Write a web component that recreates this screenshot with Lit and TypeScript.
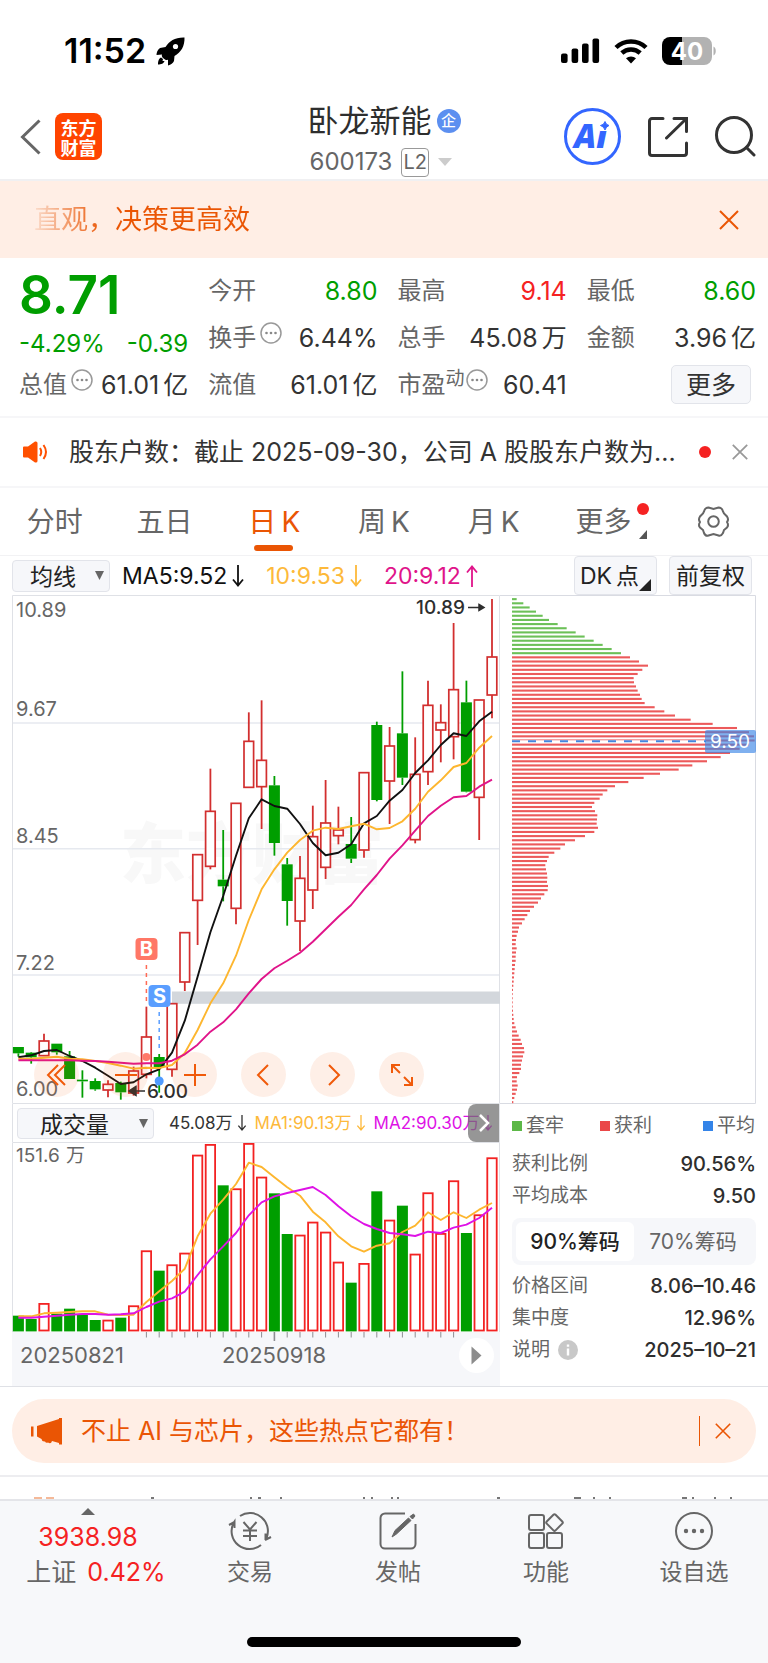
import { LitElement, html, svg, css, nothing } from "lit";
import { customElement } from "lit/decorators.js";

const STEP = 12.8;
const FIRST = 6.4;
const RED = "#d22f2f";
const GREEN = "#009e00";

/* Chart rows are stored in thirds of a pixel below the frame's top edge. */
const px = (v: number, top: number) => (v - top) / 3;
const line = (values: number[], top: number) =>
  values.map((v, i) => `${(FIRST + i * STEP).toFixed(1)},${px(v, top).toFixed(1)}`).join(" ");

/* up, body top, body bottom, high, low */
const CANDLES: number[][] = [
  [0, 1371, 1390, 1371, 1400], [0, 1388, 1402, 1386, 1421], [1, 1353, 1397, 1331, 1397],
  [0, 1361, 1387, 1361, 1394], [0, 1399, 1467, 1383, 1467], [0, 1469, 1474, 1441, 1523],
  [0, 1473, 1498, 1465, 1502], [1, 1483, 1500, 1471, 1522], [0, 1479, 1507, 1475, 1529],
  [1, 1443, 1509, 1430, 1517], [1, 1341, 1453, 1250, 1465], [0, 1401, 1431, 1392, 1508],
  [1, 1241, 1438, 1241, 1460], [1, 1028, 1176, 1028, 1203], [1, 794, 931, 794, 1065],
  [1, 664, 829, 536, 838], [0, 869, 889, 720, 934], [1, 640, 955, 640, 1003],
  [1, 454, 592, 367, 592], [1, 511, 590, 331, 717], [0, 586, 759, 558, 797],
  [0, 823, 933, 804, 1007], [1, 865, 993, 798, 1083], [1, 740, 900, 647, 957],
  [1, 699, 832, 570, 867], [1, 720, 737, 650, 763], [0, 762, 806, 681, 819],
  [1, 548, 780, 548, 803], [0, 405, 630, 395, 634], [1, 468, 573, 411, 702],
  [0, 430, 563, 244, 585], [1, 553, 749, 442, 760], [1, 346, 545, 272, 585],
  [1, 398, 420, 343, 517], [1, 299, 440, 99, 508], [0, 337, 605, 272, 607],
  [1, 330, 622, 330, 750], [1, 201, 315, 27, 385],
];
const MA5 = [1402, 1396, 1383, 1380, 1398, 1413, 1433, 1457, 1482, 1477, 1453, 1438, 1388, 1292, 1160, 1027, 918, 797, 685, 628, 648, 656, 702, 759, 796, 788, 763, 700, 678, 632, 600, 549, 511, 465, 430, 438, 394, 365];
const MA10 = [1406, 1406, 1403, 1400, 1406, 1408, 1413, 1419, 1427, 1436, 1433, 1434, 1425, 1389, 1320, 1240, 1180, 1097, 990, 898, 838, 788, 750, 722, 713, 717, 709, 701, 718, 714, 694, 656, 605, 571, 531, 519, 473, 438];
const MA20 = [1411, 1411, 1411, 1411, 1411, 1412, 1413, 1415, 1418, 1421, 1420, 1420, 1412, 1393, 1364, 1325, 1297, 1258, 1210, 1167, 1135, 1112, 1088, 1055, 1018, 980, 945, 898, 855, 806, 766, 722, 678, 647, 622, 618, 590, 569];
const VOLUME = [678, 688, 640, 672, 657, 674, 691, 690, 684, 647, 482, 543, 524, 489, 195, 163, 287, 296, 160, 261, 311, 433, 435, 396, 426, 516, 579, 520, 305, 390, 348, 492, 308, 430, 272, 430, 374, 203];
const VMA1 = [680, 680, 671, 669, 667, 665, 665, 675, 676, 675, 637, 605, 574, 537, 440, 372, 330, 283, 219, 232, 263, 293, 318, 366, 398, 440, 470, 486, 468, 461, 427, 408, 368, 391, 368, 385, 360, 340];
const VMA2 = [684, 684, 681, 678, 675, 673, 673, 675, 674, 671, 652, 636, 626, 606, 556, 509, 470, 430, 377, 338, 320, 310, 301, 292, 316, 350, 380, 403, 418, 430, 434, 439, 426, 430, 414, 405, 385, 354];
const CHIPS = [14, 34, 53, 72, 92, 111, 137, 164, 191, 218, 245, 272, 299, 327, 354, 381, 408, 391, 377, 365, 366, 372, 377, 384, 389, 398, 428, 457, 489, 536, 602, 675, 711, 726, 728, 710, 683, 654, 626, 585, 541, 500, 444, 395, 349, 309, 286, 272, 263, 247, 240, 249, 256, 255, 254, 258, 247, 219, 189, 159, 145, 127, 110, 105, 100, 102, 105, 106, 105, 108, 107, 97, 87, 78, 66, 54, 46, 38, 30, 21, 18, 14, 12, 11, 14, 12, 11, 11, 9, 8, 7, 6, 5, 4, 3, 2, 2, 2, 2, 3, 4, 5, 7, 11, 15, 20, 26, 30, 36, 37, 33, 30, 27, 27, 22, 15, 14, 17, 15, 11, 7, 4];

const base = css`
  * { box-sizing: border-box; }
  svg { display: block; }
  button, select, a { font: inherit; color: inherit; }
  button { border: 0; padding: 0; margin: 0; background: none; cursor: pointer; }
  text { font-family: Inter, "Noto Sans CJK SC", sans-serif; }
`;

@customElement("candle-chart")
export class CandleChart extends LitElement {
  static styles = [base, css`
    :host { display: block; position: relative; }
    .chart { width: 100%; height: auto; }
    .tools { position: absolute; left: 22px; bottom: 7px; display: flex; gap: 24px; }
    .tool { width: 45px; height: 45px; border-radius: 50%; background: rgba(245, 96, 20, 0.1); display: grid; place-items: center; }
    .axis { font-size: 20px; fill: #666; }
    .mark { font-size: 19px; font-weight: 500; fill: #2e2e2e; }
    .flag { font-size: 20px; font-weight: 700; fill: #fff; text-anchor: middle; }
    .brand { font-size: 66px; font-weight: 900; fill: #f8f8f8; }
  `];

  private candle(c: number[], i: number) {
    const x = FIRST + i * STEP;
    const [up, t, b, h, l] = [c[0], ...c.slice(1).map((v) => px(v, 15))];
    return svg`
      ${h < t ? svg`<path d=${`M${x} ${h}V${t}`} stroke=${up ? RED : GREEN} stroke-width="1.8"/>` : nothing}
      ${l > b ? svg`<path d=${`M${x} ${b}V${l}`} stroke=${up ? RED : GREEN} stroke-width="1.8"/>` : nothing}
      ${up
        ? svg`<rect x=${x - 4.8} y=${t} width="9.6" height=${b - t} fill="#fff" stroke=${RED} stroke-width="1.7"/>`
        : svg`<rect x=${x - 5.5} y=${t} width="11" height=${b - t} fill=${GREEN}/>`}`;
  }

  private tool(label: string, d: string) {
    return html`<button class="tool" aria-label=${label}>
      <svg width="28" height="28" viewBox="0 0 28 28" fill="none" stroke="#f05a0a" stroke-width="2"><path d=${d}/></svg>
    </button>`;
  }

  render() {
    return html`
      <svg class="chart" viewBox="0 0 488 509" role="img" aria-label="日K线">
        <text class="brand" x="108" y="283">东方财富</text>
        <g stroke="#e6e9ef" stroke-width="1.5" fill="none">
          <path d="M0 128H488M0 253.7H488M0 380H488"/>
          <path d="M.5 .5H487.5V508.5H.5Z" stroke="#dfe1e6" stroke-width="1"/>
        </g>
        <rect x="160" y="396.5" width="328" height="12.3" fill="#d3d7dc"/>
        <text class="axis" x="4" y="22">10.89</text>
        <text class="axis" x="4" y="121">9.67</text>
        <text class="axis" x="4" y="248">8.45</text>
        <text class="axis" x="4" y="375">7.22</text>
        <text class="axis" x="4" y="501">6.00</text>
        ${CANDLES.map((c, i) => this.candle(c, i))}
        <path d="M134.4 370V408" stroke="#ff6a55" stroke-width="1.5" stroke-dasharray="4 4"/>
        <path d="M147.2 417V456" stroke="#5a9eff" stroke-width="1.5" stroke-dasharray="4 4"/>
        <circle cx="134.4" cy="462" r="4" fill="#ff7a6a"/>
        <circle cx="147.2" cy="486" r="4.5" fill="#4f9bff"/>
        <g fill="none" stroke-width="1.9" stroke-linejoin="round">
          <polyline points=${line(MA5, 15)} stroke="#111"/>
          <polyline points=${line(MA10, 15)} stroke="#fdb62f"/>
          <polyline points=${line(MA20, 15)} stroke="#e0148a"/>
        </g>
        <rect x="123.5" y="343" width="22" height="22" rx="4" fill="#ff7766"/>
        <text class="flag" x="134.4" y="361">B</text>
        <rect x="136.5" y="390" width="22" height="22" rx="4" fill="#5a9eff"/>
        <text class="flag" x="147.5" y="408">S</text>
        <path d="M133 496H118M124 491.5L117 496L124 500.5Z" stroke="#2e2e2e" stroke-width="1.5" fill="#2e2e2e"/>
        <text class="mark" x="135" y="503">6.00</text>
        <text class="mark" x="404" y="19">10.89</text>
        <path d="M456 12.5H471M467 9.5L472 12.5L467 15.5Z" stroke="#2e2e2e" stroke-width="1.5" fill="#2e2e2e"/>
      </svg>
      <div class="tools">
        ${this.tool("最左", "M15 4L5 14L15 24M22 4L12 14L22 24")}
        ${this.tool("缩小", "M3 14H25")}
        ${this.tool("放大", "M3 14H25M14 3V25")}
        ${this.tool("左移", "M18 4L8 14L18 24")}
        ${this.tool("右移", "M10 4L20 14L10 24")}
        ${this.tool("全屏", "M4 12V4H12M4 4L12 12M24 16V24H16M24 24L16 16")}
      </div>`;
  }
}

@customElement("chip-chart")
export class ChipChart extends LitElement {
  static styles = [base, css`
    :host { display: block; }
    .chart { width: 100%; height: auto; }
    .avg { font-size: 19px; fill: #fff; }
  `];
  render() {
    return html`<svg class="chart" viewBox="0 0 256 509" role="img" aria-label="筹码分布">
      <path d="M0 .5H255.5V508.5H0" fill="none" stroke="#d9dbe2"/>
      ${CHIPS.map((w, i) => svg`<rect x="12" y=${3.1 + i * 4.157} width=${w / 3} height="2.1" fill=${i < 14 ? "#6cc058" : "#ec5a5b"}/>`)}
      <path d="M12 146.2H206" stroke="#fff" stroke-width="2"/>
      <path d="M12 146.2H206" stroke="#4486e0" stroke-width="2" stroke-dasharray="8 8"/>
      <rect x="205" y="135" width="51" height="23" rx="2" fill="#3a86e6" fill-opacity=".65"/>
      <text class="avg" x="210" y="153">9.50</text>
    </svg>`;
  }
}

@customElement("volume-chart")
export class VolumeChart extends LitElement {
  static styles = [base, css`
    :host { display: block; }
    .chart { width: 100%; height: auto; }
    .axis { font-size: 19px; fill: #666; }
    .date { font-size: 22px; fill: #666; }
  `];
  render() {
    return html`<svg class="chart" viewBox="0 0 488 244" role="img" aria-label="成交量">
      <rect y="190" width="488" height="54" fill="#f6f7fa"/>
      <path d="M.5 190V.5H487.5V190" fill="none" stroke="#dfe1e6"/>
      <text class="axis" x="4" y="20">151.6</text><text class="axis" x="54" y="20">万</text>
      ${VOLUME.map((v, i) => {
        const x = FIRST + i * STEP;
        const y = px(v, 157);
        return CANDLES[i][0]
          ? svg`<rect x=${x - 4.7} y=${y + 0.9} width="9.4" height=${187.6 - y} fill="#fff" stroke="#f32222" stroke-width="1.8"/>`
          : svg`<rect x=${x - 5.5} y=${y} width="11" height=${189.4 - y} fill=${GREEN}/>`;
      })}
      <g fill="none" stroke-width="1.9" stroke-linejoin="round">
        <polyline points=${line(VMA1, 157)} stroke="#fdb62f"/>
        <polyline points=${line(VMA2, 157)} stroke="#de12e6"/>
      </g>
      ${Array.from({ length: 25 }, (_, k) => k + 10).map((i) => svg`<path d=${`M${FIRST + i * STEP} 190V${i === 20 ? 199 : 195.5}`} stroke="#8d8d92" stroke-width=${i === 20 ? 1.6 : 1}/>`)}
      <text class="date" x="8" y="221">20250821</text>
      <text class="date" x="262" y="221" text-anchor="middle">20250918</text>
      <circle cx="464.5" cy="213.5" r="17.5" fill="#fff"/>
      <path d="M459.5 204.5V222.5L469.5 213.5Z" fill="#8c8c8c"/>
    </svg>`;
  }
}

@customElement("app-root")
export class AppRoot extends LitElement {
  static styles = [base, css`
    :host { display: block; background: #fff; color: #333; font-family: Inter, "Noto Sans CJK SC", sans-serif; font-size: 24px; line-height: 32px; }
    .status { display: flex; justify-content: space-between; align-items: center; height: 102px; padding: 0 52px 0 64px; color: #000; }
    .clock { display: flex; align-items: center; gap: 10px; font-size: 34px; font-weight: 600; }
    .signals { display: flex; align-items: center; gap: 14px; }
    .battery-text { font-size: 24px; font-weight: 700; fill: #fff; text-anchor: middle; }

    .head { display: grid; grid-template-columns: 1fr auto 1fr; align-items: center; height: 79px; padding: 0 12px 2px; border-bottom: 2px solid #f0f0f2; }
    .head-side { display: flex; align-items: center; gap: 14px; padding: 0 0 7px 8px; }
    .head-end { justify-content: flex-end; gap: 27px; }
    .logo { display: grid; place-items: center; width: 47px; height: 47px; border-radius: 8px; background: #ff4400; color: #fff; font-family: "Noto Sans CJK SC", sans-serif; font-weight: 700; font-size: 18px; line-height: 20px; text-decoration: none; }
    .title { display: flex; align-items: center; gap: 5px; font-size: 31px; line-height: 38px; font-weight: 400; margin: 0; color: #2e2e2e; }
    .corp { display: grid; place-items: center; width: 24px; height: 24px; border-radius: 50%; background: #5c8ff0; color: #fff; font-size: 15px; font-weight: 500; line-height: 24px; }
    .code { display: flex; align-items: center; gap: 9px; padding: 6px 0 0 2px; font-size: 24px; color: #666; }
    .level { border: 1px solid #999; border-radius: 4px; padding: 0 1px; font-size: 20px; line-height: 27px; }
    .ai { fill: #3366ff; font-size: 33px; font-weight: 900; font-style: italic; text-anchor: middle; font-family: "Noto Sans", Inter, sans-serif; }

    .ticker { display: flex; justify-content: space-between; align-items: center; height: 77px; padding: 0 29px 0 34px; background: #ffeee5; color: #ea5504; font-size: 27px; }
    .fade { background: linear-gradient(90deg, #fbdccb 0, #ea5504 70px); -webkit-background-clip: text; background-clip: text; color: transparent; }

    .quote { display: grid; grid-template-columns: repeat(4, minmax(0, 1fr)); grid-template-rows: repeat(3, 47px); column-gap: 20px; padding: 9px 12px 8px 19px; border-bottom: 2px solid #f6f6f8; }
    .price { grid-row: span 2; }
    .big { font-size: 53px; font-weight: 600; line-height: 56px; color: #009e00; }
    .delta { display: flex; justify-content: space-between; padding-top: 8px; font-size: 24px; line-height: 26px; color: #009e00; }
    .cell { display: flex; justify-content: space-between; align-items: center; white-space: nowrap; font-size: 25px; }
    .label { display: flex; color: #666; font-size: 24px; }
    .unit { margin-left: 4px; }
    .info { margin-left: 4px; }
    .sup { font-size: 19px; line-height: 20px; }
    .sup + .info { margin-left: 1px; }
    .more { width: 80px; height: 39px; margin-right: 5px; border: 1px solid #e2e4ea; border-radius: 5px; background: #f6f7fa; font-size: 25px; }

    .notice { display: flex; align-items: center; height: 70px; padding: 0 20px 0 22px; gap: 21px; border-bottom: 2px solid #f6f6f8; }
    .notice-text { flex: 1; min-width: 0; font-size: 25px; white-space: nowrap; }
    .dot { width: 12px; height: 12px; border-radius: 50%; background: #f52222; }

    .tabs { display: grid; grid-template-columns: repeat(7, minmax(0, 1fr)); justify-items: center; align-items: center; height: 68px; border-bottom: 1px solid #f2f2f4; font-size: 28px; color: #666; }
    .tab { position: relative; height: 66px; white-space: nowrap; }
    .tab.on { color: #ea5504; }
    .tab.on::after { content: ""; position: absolute; left: 50%; bottom: 4px; width: 39px; height: 6px; margin-left: -20px; border-radius: 3px; background: #ea5504; }
    .latin { margin-left: 5px; }
    .tab-flag { position: absolute; left: 100%; top: 14px; display: grid; gap: 15px; justify-items: center; padding-left: 6px; }

    .bar { display: flex; align-items: center; height: 39px; padding: 0 16px 0 12px; font-size: 23px; white-space: nowrap; }
    .pick { position: relative; display: block; }
    .pick select { appearance: none; display: block; width: 98px; height: 32px; padding: 0 0 0 17px; border: 1px solid #e2e4ea; border-radius: 4px; background: #f6f7fa; font-size: 23px; color: #222; }
    .pick svg { position: absolute; right: 6px; top: 11px; pointer-events: none; }
    .ma { display: flex; align-items: center; gap: 22px; flex: 1; padding-left: 12px; color: #111; }
    .ma-item { display: flex; align-items: center; gap: 5px; }
    .gold { color: #fdb93a; }
    .pink { color: #e0148a; }
    .violet { color: #de12e6; }
    .chip { position: relative; height: 39px; border: 1px solid #e2e4ea; border-radius: 4px; background: #f6f7fa; color: #222; font-size: 23px; padding: 0 6px; }
    .chip.corner { padding: 0 17px 0 5px; margin-right: 12px; }
    .chip.corner::after { content: ""; position: absolute; right: 5px; bottom: 3px; border: 6px solid #222; border-top-color: transparent; border-left-color: transparent; }

    .charts { display: grid; grid-template-columns: minmax(0, 488fr) minmax(0, 256fr); padding: 0 12px; border-bottom: 1px solid #dfe1e6; }
    .vol-bar { position: relative; display: flex; align-items: center; height: 38px; border-right: 1px solid #dfe1e6; border-left: 1px solid #dfe1e6; padding-left: 4px; font-size: 17px; white-space: nowrap; overflow: hidden; }
    .vol-bar select { width: 137px; height: 31px; padding-left: 22px; }
    .vol-bar .ma-item { gap: 3px; }
    .vol-bar .ma { gap: 7px; padding-left: 15px; color: #333; }
    .expand { position: absolute; right: 0; top: 0; display: grid; place-items: center; width: 31px; height: 38px; border-radius: 8px 0 0 8px; background: rgba(110, 110, 110, 0.72); }

    .side { display: flex; flex-direction: column; padding-left: 12px; font-size: 19px; }
    .legend { display: grid; grid-template-columns: 88px 1fr auto; padding: 6px 1px 6px 0; color: #666; }
    .key { display: flex; align-items: center; gap: 4px; }
    .swatch { width: 10px; height: 10px; }
    .green { background: #5cb847; }
    .red { background: #ea4748; }
    .blue { background: #3484e8; }
    .facts { margin: 0; }
    .fact { display: flex; justify-content: space-between; align-items: center; }
    .fact dt { display: flex; align-items: center; gap: 8px; color: #666; }
    .fact dd { margin: 0; font-size: 20px; font-weight: 500; color: #2e2e2e; }
    .segment { display: grid; grid-template-columns: 1fr 1fr; margin: 6px 0 5px; padding: 4px; border-radius: 8px; background: #f6f7fa; font-size: 21px; }
    .seg { height: 39px; border-radius: 6px; color: #666; white-space: nowrap; }
    .seg.on { background: #fff; color: #222; font-weight: 500; }

    .promo-wrap { padding: 12px; border-bottom: 2px solid #ededf0; }
    .promo { display: flex; align-items: center; height: 64px; padding: 0 25px 0 19px; border-radius: 32px; background: #ffeee5; color: #ea5504; font-size: 25px; }
    .promo-text { flex: 1; padding-left: 19px; text-decoration: none; }
    .rule { width: 1px; height: 30px; margin-right: 15px; background: #ea5504; }
    .peek { height: 22px; display: flex; align-items: flex-end; }
    .peek svg { width: 100%; height: 2px; }

    .dock { display: grid; grid-template-columns: 176px repeat(4, minmax(0, 1fr)); height: 165px; padding: 0 0 40px; border-top: 2px solid #e4e5e9; background: #f7f8fa; color: #666; font-size: 23px; position: relative; }
    .dock-item { display: flex; flex-direction: column; align-items: center; gap: 5px; padding-top: 10px; }
    .index { padding-top: 7px; gap: 3px; white-space: nowrap; font-size: 25px; }
    .index svg { margin-bottom: 3px; }
    .index-change { display: flex; gap: 11px; padding-left: 16px; }
    .up { color: #f52222; }
    .down { color: #009e00; }
    .home { position: absolute; left: 50%; bottom: 17px; width: 274px; height: 10px; margin-left: -137px; border-radius: 5px; background: #000; }
  `];

  private close(size: number, color: string, w = 2) {
    return html`<button aria-label="关闭"><svg width=${size} height=${size} viewBox="0 0 20 20" fill="none" stroke=${color} stroke-width=${w}><path d="M1 1L19 19M19 1L1 19"/></svg></button>`;
  }
  private info() {
    return html`<svg class="info" width="22" height="22" viewBox="0 0 22 22" fill="none" stroke="#999" stroke-width="1.5"><circle cx="11" cy="11" r="10"/><g fill="#888" stroke="none"><circle cx="6.5" cy="11" r="1.3"/><circle cx="11" cy="11" r="1.3"/><circle cx="15.5" cy="11" r="1.3"/></g></svg>`;
  }
  private cell(label: string, value: string, tone = "", unit = "", info = false) {
    return html`<div class="cell"><span class="label">${label}${info ? this.info() : nothing}</span><span class=${tone}>${value}${unit ? html`<span class="unit">${unit}</span>` : nothing}</span></div>`;
  }
  private arrow(up: boolean, h: number) {
    return html`<svg width="12" height=${h} viewBox="0 0 12 22" fill="none" stroke="currentColor" stroke-width="1.8"><path d=${up ? "M6 22V1.5M1 7.5L6 1.5L11 7.5" : "M6 0V20.5M1 14.5L6 20.5L11 14.5"}/></svg>`;
  }
  private fact(label: string, value: string) {
    return html`<div class="fact"><dt>${label}</dt><dd>${value}</dd></div>`;
  }
  private caret() {
    return html`<svg width="9" height="9" viewBox="0 0 9 9" fill="#666"><path d="M0 0H9L4.5 9Z"/></svg>`;
  }

  render() {
    return html`
      <div class="status">
        <div class="clock"><span>11:52</span>
          <svg width="29" height="29" viewBox="0 0 29 29"><path d="M28.5 .5C19 .2 13.5 4 9.5 10L4 11C1.5 13 .5 15.5 .5 18L6 17.5C5.5 18.5 6 20 7 21L9 22.5C10.5 23.5 11.5 23 12 22.5L12 28.5C15 27.5 17 26 18 24L18.5 19C25 15.5 28.8 9 28.5 .5Z"/><circle cx="19.5" cy="9.5" r="2.6" fill="#fff"/><path d="M5 20.5C2.5 21.5 2 25 2 27.5C5 27.5 8 26.5 8.5 24L6.5 24L7 22Z"/></svg>
        </div>
        <div class="signals">
          <svg width="39" height="26" viewBox="0 0 39 26"><rect y="15.5" width="6.6" height="9.5" rx="2"/><rect x="10.6" y="10.5" width="6.6" height="14.5" rx="2"/><rect x="21" y="5.5" width="6.6" height="19.5" rx="2"/><rect x="31.5" y=".5" width="6.6" height="24.5" rx="2"/></svg>
          <svg width="34" height="26" viewBox="0 0 34 26" fill="none" stroke="#000" stroke-width="4.5"><path d="M2 9.5A21.5 21.5 0 0 1 32 9.5"/><path d="M7.8 15A13.5 13.5 0 0 1 26.2 15"/><path d="M17 25.5L12 20.3A7.5 7.5 0 0 1 22 20.3Z" fill="#000" stroke="none"/></svg>
          <svg width="54" height="28" viewBox="0 0 54 28"><path d="M20 0V28H8A8 8 0 0 1 0 20V8A8 8 0 0 1 8 0Z"/><path d="M20 0V28H42A8 8 0 0 0 50 20V8A8 8 0 0 0 42 0ZM51.5 9.5C54.5 11 54.5 17 51.5 18.5Z" fill="#b2b2b2"/><text class="battery-text" x="25" y="22.5">40</text></svg>
        </div>
      </div>

      <header class="head">
        <div class="head-side">
          <button aria-label="返回"><svg width="21" height="36" viewBox="0 0 21 36" fill="none" stroke="#666" stroke-width="3"><path d="M19.5 1.5L2.5 18L19.5 34.5"/></svg></button>
          <a class="logo" href="#"><span>东方<br>财富</span></a>
        </div>
        <div>
          <h1 class="title">卧龙新能<span class="corp">企</span></h1>
          <div class="code"><span>600173</span><span class="level">L2</span><svg width="14" height="8" viewBox="0 0 14 8" fill="#ccc"><path d="M0 0H14L7 8Z"/></svg></div>
        </div>
        <div class="head-side head-end">
          <button aria-label="AI"><svg width="57" height="57" viewBox="0 0 57 57"><circle cx="28.5" cy="28.5" r="27" fill="none" stroke="#3366ff" stroke-width="3"/><text class="ai" x="26.5" y="39.5">Ai</text><path d="M36 12H46V23H36Z" fill="#fff"/><path d="M41 13.5Q42 17 45 17.5Q42 18.5 41 22Q40 18.5 36.5 17.5Q40 17 41 13.5Z" fill="#3366ff" stroke="#3366ff"/></svg></button>
          <button aria-label="分享"><svg width="40" height="40" viewBox="0 0 40 40" fill="none" stroke="#333" stroke-width="3" stroke-linecap="round"><path d="M15 1.5H4A2.5 2.5 0 0 0 1.5 4V36A2.5 2.5 0 0 0 4 38.5H36A2.5 2.5 0 0 0 38.5 36V26M26 1.5H38.5V14.5M38 2L18.5 21"/></svg></button>
          <button aria-label="搜索"><svg width="41" height="41" viewBox="0 0 41 41" fill="none" stroke="#333" stroke-width="3" stroke-linecap="round"><circle cx="19" cy="19" r="17.5"/><path d="M31.5 31.5L39 39"/></svg></button>
        </div>
      </header>

      <section class="ticker"><span class="fade">直观，决策更高效</span>${this.close(20, "#ea5504")}</section>

      <section class="quote">
        <div class="price">
          <div class="big">8.71</div>
          <div class="delta"><span>-4.29%</span><span>-0.39</span></div>
        </div>
        ${this.cell("今开", "8.80", "down")}
        ${this.cell("最高", "9.14", "up")}
        ${this.cell("最低", "8.60", "down")}
        ${this.cell("换手", "6.44%", "", "", true)}
        ${this.cell("总手", "45.08", "", "万")}
        ${this.cell("金额", "3.96", "", "亿")}
        ${this.cell("总值", "61.01", "", "亿", true)}
        ${this.cell("流值", "61.01", "", "亿")}
        <div class="cell"><span class="label">市盈<span class="sup">动</span>${this.info()}</span><span>60.41</span></div>
        <div class="cell"><span></span><button class="more">更多</button></div>
      </section>

      <section class="notice">
        <svg width="26" height="22" viewBox="0 0 26 22" fill="none" stroke="#ff5000" stroke-width="2"><path d="M1 6.5Q1 5.5 2 5.5H6L13 .5Q15.5 0 15.5 2V20Q15.5 22 13 21.5L6 16.5H2Q1 16.5 1 15.5Z" fill="#ff5000" stroke="none"/><path d="M18 7Q20.5 11 18 15M21.5 4Q26.5 11 21.5 18"/></svg>
        <span class="notice-text">股东户数：截止 2025-09-30，公司 A 股股东户数为...</span>
        <i class="dot"></i>
        ${this.close(16, "#999", 2.2)}
      </section>

      <nav class="tabs">
        <button class="tab">分时</button><button class="tab">五日</button>
        <button class="tab on">日<span class="latin">K</span></button>
        <button class="tab">周<span class="latin">K</span></button>
        <button class="tab">月<span class="latin">K</span></button>
        <button class="tab">更多<span class="tab-flag"><i class="dot"></i><svg width="8" height="9" viewBox="0 0 8 9" fill="#555"><path d="M8 0V9H0Z"/></svg></span></button>
        <button aria-label="设置"><svg width="33" height="33" viewBox="0 0 33 33" fill="none" stroke="#666" stroke-width="2"><path d="M11.5 2.5L16.5 4L21.5 2.5Q25 2.5 26 6.5L27 8.5L30 11.5Q32 14.500 30 17Q32 20 30 22.5L27 25L26 28Q24 31.500 21.500 30.500L16.500 29L11.500 30.500Q8.500 31.500 7 28L6 25L3 22.500Q1 20 3 17Q1 14.500 3 11.500L6 8.500L7 6.500Q8 2.500 11.500 2.500Z"/><circle cx="16.5" cy="16.5" r="5.3"/></svg></button>
      </nav>

      <section class="bar">
        <label class="pick"><select aria-label="主图指标"><option>均线</option></select>${this.caret()}</label>
        <div class="ma">
          <span class="ma-item">MA5:9.52${this.arrow(false, 22)}</span>
          <span class="ma-item gold">10:9.53${this.arrow(false, 22)}</span>
          <span class="ma-item pink">20:9.12${this.arrow(true, 22)}</span>
        </div>
        <button class="chip corner">DK<span class="unit">点</span></button><button class="chip">前复权</button>
      </section>

      <section class="charts">
        <div>
          <candle-chart></candle-chart>
          <div class="vol-bar">
            <label class="pick"><select aria-label="副图指标"><option>成交量</option></select>${this.caret()}</label>
            <div class="ma">
              <span class="ma-item">45.08万${this.arrow(false, 16)}</span>
              <span class="ma-item gold">MA1:90.13万${this.arrow(false, 16)}</span>
              <span class="ma-item violet">MA2:90.30万${this.arrow(false, 16)}</span>
            </div>
            <button class="expand" aria-label="展开"><svg width="12" height="20" viewBox="0 0 12 20" fill="none" stroke="#fff" stroke-width="2.5"><path d="M2 2L10 10L2 18"/></svg></button>
          </div>
          <volume-chart></volume-chart>
        </div>
        <div>
          <chip-chart></chip-chart>
          <div class="side">
            <div class="legend">
              <span class="key"><i class="swatch green"></i>套牢</span>
              <span class="key"><i class="swatch red"></i>获利</span>
              <span class="key"><i class="swatch blue"></i>平均</span>
            </div>
            <dl class="facts">
              ${this.fact("获利比例", "90.56%")}
              ${this.fact("平均成本", "9.50")}
            </dl>
            <div class="segment"><button class="seg on">90%筹码</button><button class="seg">70%筹码</button></div>
            <dl class="facts">
              ${this.fact("价格区间", "8.06–10.46")}
              ${this.fact("集中度", "12.96%")}
              <div class="fact"><dt>说明<svg width="20" height="20" viewBox="0 0 20 20"><circle cx="10" cy="10" r="10" fill="#c8c8c8"/><path d="M10 8.5V15.5M10 4.5V6.7" stroke="#fff" stroke-width="2.4"/></svg></dt><dd>2025–10–21</dd></div>
            </dl>
          </div>
        </div>
      </section>

      <section class="promo-wrap">
        <div class="promo">
          <svg width="31" height="27" viewBox="0 0 31 27" fill="#ea5504"><path d="M0 8.5H2.5V18.5H0ZM6 8L28 1V0H31V26.5H28V25L21 23Q20 26.5 17 24.5Q15 25.5 14 23.5Q11 24 10.5 21L6 18.5Z"/></svg>
          <a class="promo-text" href="#">不止 AI 与芯片，这些热点它都有！</a>
          <i class="rule"></i>${this.close(16, "#ea5504", 2)}
        </div>
      </section>

      <div class="peek"><svg viewBox="0 0 768 2" preserveAspectRatio="none"><path d="M34 1H42M46 1H54" stroke="#f5b998" stroke-width="2"/><path d="M151 1H154M250 1H252M258 1H261M280 1H282M363 1H365M371 1H373M391 1H393M397 1H399M497 1H500M574 1H581M593 1H595M609 1H611M682 1H687M692 1H694M714 1H716M730 1H732" stroke="#777" stroke-width="2"/></svg></div>

      <nav class="dock">
        <button class="dock-item index">
          <svg width="14" height="7" viewBox="0 0 14 7" fill="#666"><path d="M7 0L14 7H0Z"/></svg>
          <span class="up">3938.98</span>
          <span class="index-change">上证<span class="up">0.42%</span></span>
        </button>
        <button class="dock-item">
          <svg width="44" height="40" viewBox="0 0 44 40" fill="none" stroke="#666" stroke-width="2"><path d="M12 5A18 18 0 0 1 38.5 27L37.5 29V22.5M37 29L43 26M33 34A18 18 0 0 1 5.5 12L6.5 10.5L6.5 17M6.5 11L1 14"/><path d="M15.5 11L22 18.5L28.5 11M15 19.5H29M15 25H29M22 19V30"/></svg>交易</button>
        <button class="dock-item">
          <svg width="40" height="40" viewBox="0 0 40 40" fill="none" stroke="#666" stroke-width="2"><path d="M27 2.5H7A4.5 4.5 0 0 0 2.5 7V33A4.5 4.5 0 0 0 7 37.5H33A4.5 4.5 0 0 0 37.5 33V13"/><path d="M14 26L17 19.5L30.5 7L33 9.5L18.5 23ZM32 5.5L35.5 3L37 5L34.5 8Z" fill="#666" stroke-width="1"/></svg>发帖</button>
        <button class="dock-item">
          <svg width="40" height="40" viewBox="0 0 40 40" fill="none" stroke="#666" stroke-width="2"><rect x="3" y="4" width="15" height="15" rx="2"/><rect x="3" y="22" width="15" height="15" rx="2"/><rect x="21" y="22" width="15" height="15" rx="2"/><rect x="22.3" y="5.3" width="12.5" height="12.5" rx="1.5" transform="rotate(45 28.5 11.5)"/></svg>功能</button>
        <button class="dock-item">
          <svg width="40" height="40" viewBox="0 0 40 40" fill="none" stroke="#666" stroke-width="2"><circle cx="20" cy="20" r="18"/><g fill="#666" stroke="none"><circle cx="12" cy="20" r="2.2"/><circle cx="20" cy="20" r="2.2"/><circle cx="28" cy="20" r="2.2"/></g></svg>设自选</button>
        <i class="home"></i>
      </nav>`;
  }
}
